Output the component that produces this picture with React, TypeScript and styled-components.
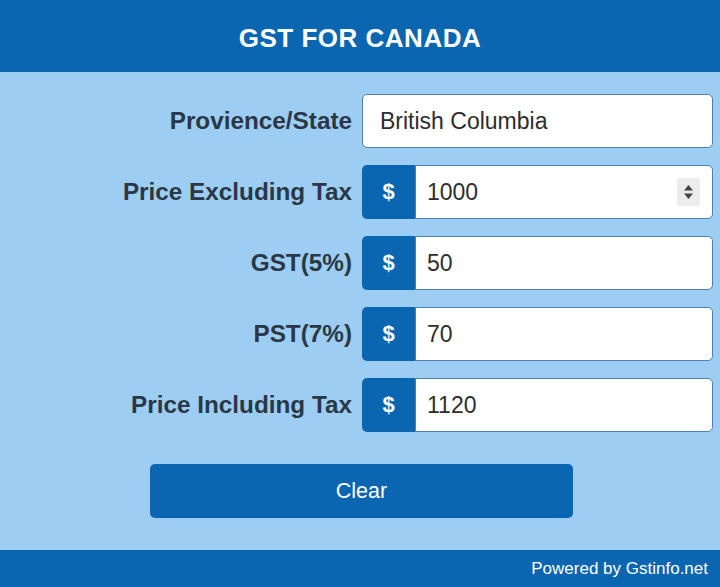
import React from "react";
import styled, { createGlobalStyle } from "styled-components";

const Global = createGlobalStyle`
  html, body { margin: 0; padding: 0; background: #9dcdf3; }
  body { font-family: "Liberation Sans", Arial, sans-serif; }
`;

const Calculator = styled.div`
  width: 720px;
  height: 587px;
  display: flex;
  flex-direction: column;
  background: #9dcdf3;
`;

const Header = styled.header`
  height: 72px;
  flex: none;
  background: #0a66b0;
  color: #fff;
  display: flex;
  align-items: center;
  justify-content: center;
  font-weight: bold;
  font-size: 26px;
  letter-spacing: 0.5px;
  padding-top: 4px;
  box-sizing: border-box;
`;

const Body = styled.main`
  flex: 1;
  padding: 22px 7px 0 0;
  display: flex;
  flex-direction: column;
`;

const Form = styled.div`
  display: grid;
  grid-template-columns: 352px 1fr;
  column-gap: 10px;
  row-gap: 17px;
`;

const Label = styled.label`
  font-size: 24.3px;
  font-weight: bold;
  color: #2a3846;
  text-align: right;
  align-self: center;
`;

const Group = styled.div`
  display: flex;
  height: 54px;
`;

const Addon = styled.div`
  width: 53px;
  flex: none;
  background: #0a66b0;
  color: #fff;
  font-weight: bold;
  font-size: 22px;
  display: flex;
  align-items: center;
  justify-content: center;
  border-radius: 5px 0 0 5px;
`;

const Field = styled.div<{ $attached?: boolean; $pad: number }>`
  flex: 1;
  display: flex;
  align-items: center;
  background: #fff;
  border: 1px solid #4d81ad;
  border-radius: ${(p) => (p.$attached ? "0 5px 5px 0" : "5px")};
  padding-left: ${(p) => p.$pad}px;
  padding-right: 12px;
  font-size: 23px;
  color: #2d2d2d;
  box-sizing: border-box;
`;

const Value = styled.span`
  flex: 1;
`;

const Stepper = styled.div`
  width: 23px;
  height: 28px;
  background: #ececec;
  border-radius: 2px;
  display: flex;
  align-items: center;
  justify-content: center;
`;

const ClearButton = styled.button`
  margin: 32px 0 0 150px;
  width: 423px;
  height: 54px;
  border: none;
  border-radius: 5px;
  background: #0a66b0;
  color: #fff;
  font-family: "Liberation Sans", Arial, sans-serif;
  font-size: 21.5px;
  cursor: pointer;
`;

const Footer = styled.footer`
  height: 37px;
  flex: none;
  background: #0a66b0;
  color: #fff;
  font-size: 17px;
  display: flex;
  align-items: center;
  justify-content: flex-end;
  padding-right: 12px;
`;

type Row = { label: string; value: string; currency: boolean; stepper?: boolean };

const rows: Row[] = [
  { label: "Provience/State", value: "British Columbia", currency: false },
  { label: "Price Excluding Tax", value: "1000", currency: true, stepper: true },
  { label: "GST(5%)", value: "50", currency: true },
  { label: "PST(7%)", value: "70", currency: true },
  { label: "Price Including Tax", value: "1120", currency: true },
];

// Up/down arrows of the number stepper
const StepIcon = () => (
  <svg width="11" height="18" viewBox="0 0 11 18">
    <path d="M1 7.5 L5.5 2 L10 7.5 Z" fill="#444" />
    <path d="M1 10.5 L5.5 16 L10 10.5 Z" fill="#444" />
  </svg>
);

export default function App() {
  return (
    <>
      <Global />
      <Calculator>
        <Header>GST FOR CANADA</Header>
        <Body>
          <Form>
            {rows.map((r) => (
              <React.Fragment key={r.label}>
                <Label>{r.label}</Label>
                <Group>
                  {r.currency && <Addon>$</Addon>}
                  <Field $attached={r.currency} $pad={r.currency ? 11 : 17}>
                    <Value>{r.value}</Value>
                    {r.stepper && (
                      <Stepper>
                        <StepIcon />
                      </Stepper>
                    )}
                  </Field>
                </Group>
              </React.Fragment>
            ))}
          </Form>
          <ClearButton>Clear</ClearButton>
        </Body>
        <Footer>Powered by Gstinfo.net</Footer>
      </Calculator>
    </>
  );
}
